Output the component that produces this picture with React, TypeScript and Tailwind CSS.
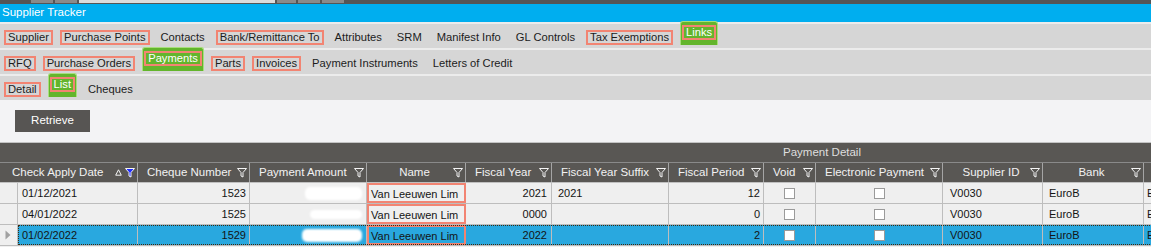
import { ReactNode } from "react";

type TabKind = "plain" | "boxed" | "active";

interface Tab {
  label: string;
  kind: TabKind;
}

const tabRows: Tab[][] = [
  [
    { label: "Supplier", kind: "boxed" },
    { label: "Purchase Points", kind: "boxed" },
    { label: "Contacts", kind: "plain" },
    { label: "Bank/Remittance To", kind: "boxed" },
    { label: "Attributes", kind: "plain" },
    { label: "SRM", kind: "plain" },
    { label: "Manifest Info", kind: "plain" },
    { label: "GL Controls", kind: "plain" },
    { label: "Tax Exemptions", kind: "boxed" },
    { label: "Links", kind: "active" },
  ],
  [
    { label: "RFQ", kind: "boxed" },
    { label: "Purchase Orders", kind: "boxed" },
    { label: "Payments", kind: "active" },
    { label: "Parts", kind: "boxed" },
    { label: "Invoices", kind: "boxed" },
    { label: "Payment Instruments", kind: "plain" },
    { label: "Letters of Credit", kind: "plain" },
  ],
  [
    { label: "Detail", kind: "boxed" },
    { label: "List", kind: "active" },
    { label: "Cheques", kind: "plain" },
  ],
];

function TabItem({ tab }: { tab: Tab }) {
  if (tab.kind === "active") {
    return (
      <div className="h-[24px] self-end rounded-t-[3px] border border-b-0 border-[#a8de7c] bg-[#63b52c] px-[1px] pt-[3px]">
        <div className="flex h-[15px] items-center border-2 border-[#f28472] px-[2px] text-white">
          {tab.label}
        </div>
      </div>
    );
  }
  return (
    <div
      className={`flex h-[15px] items-center border-2 px-[2px] text-[#1c1c1c] ${
        tab.kind === "boxed" ? "border-[#f28472]" : "border-transparent"
      }`}
    >
      {tab.label}
    </div>
  );
}

function Funnel({ active = false }: { active?: boolean }) {
  return (
    <svg width="10" height="10" viewBox="0 0 10 10" className="shrink-0">
      <path
        d="M0.5 0.5 H9.5 L6 4.5 V9 L4 8 V4.5 Z"
        fill={active ? "#1f2cff" : "none"}
        stroke="#f4f4f4"
        strokeWidth="1"
        strokeLinejoin="round"
      />
    </svg>
  );
}

function SortUp() {
  return (
    <svg width="7" height="7" viewBox="0 0 7 7" className="mr-[3px] shrink-0">
      <path d="M3.5 0.8 L6.3 6.2 H0.7 Z" fill="none" stroke="#f4f4f4" strokeWidth="1" />
    </svg>
  );
}

interface Col {
  key: string;
  label: string;
  w: number;
  center?: boolean;
}

const cols: Col[] = [
  { key: "cheque", label: "Cheque Number", w: 112 },
  { key: "amount", label: "Payment Amount", w: 117 },
  { key: "name", label: "Name", w: 99, center: true },
  { key: "fy", label: "Fiscal Year", w: 86 },
  { key: "fys", label: "Fiscal Year Suffix", w: 117 },
  { key: "fp", label: "Fiscal Period", w: 95 },
  { key: "void", label: "Void", w: 52 },
  { key: "ep", label: "Electronic Payment", w: 127 },
  { key: "sid", label: "Supplier ID", w: 100, center: true },
  { key: "bank", label: "Bank", w: 101, center: true },
];

const rows = [
  { date: "01/12/2021", cheque: "1523", blob: "w-[57px] h-[13px]", fy: "2021", fys: "2021", fp: "12" },
  { date: "04/01/2022", cheque: "1525", blob: "w-[52px] h-[9px]", fy: "0000", fys: "", fp: "0" },
  { date: "01/02/2022", cheque: "1529", blob: "w-[60px] h-[13px]", fy: "2022", fys: "", fp: "2", selected: true },
];

function Checkbox() {
  return <div className="h-[11px] w-[11px] border border-[#9a9a9a] bg-white" />;
}

function Cell({ w, className = "", children }: { w: number; className?: string; children?: ReactNode }) {
  return (
    <div
      style={{ width: w }}
      className={`flex h-full shrink-0 items-center overflow-hidden whitespace-nowrap border-r border-[#bdbdbd] ${className}`}
    >
      {children}
    </div>
  );
}

export default function App() {
  return (
    <div className="h-[247px] w-[1151px] overflow-hidden bg-[#f3f3f5] font-['Liberation_Sans',Arial,sans-serif] text-[11.5px]">
      <div className="flex h-[4px] items-start gap-[2px] bg-[#555555] pl-[31px]">
        <div className="h-[3px] w-[22px] bg-[#8a8a8a]" />
        <div className="h-[3px] w-[22px] bg-[#8a8a8a]" />
        <div className="h-[3px] w-[196px] bg-[#dcdcdc]" />
        <div className="h-[3px] w-[19px] bg-[#8a8a8a]" />
        <div className="h-[3px] w-[22px] bg-[#8a8a8a]" />
        <div className="h-[3px] w-[22px] bg-[#8a8a8a]" />
      </div>
      <div className="flex h-[18px] items-center bg-[#00aeef] pl-[2px] text-white">Supplier Tracker</div>

      <div className="flex flex-col gap-[2px] bg-[#ececec] pt-[2px] text-[11.2px]">
        {tabRows.map((row, i) => (
          <div key={i} className="flex h-[24px] items-end gap-[7px] bg-[#d6d6d6] pb-[3px] pl-[4px]">
            {row.map((t) => (
              <TabItem key={t.label} tab={t} />
            ))}
          </div>
        ))}
      </div>

      <div className="flex h-[42px] items-start pl-[15px] pt-[10px]">
        <button className="h-[22px] w-[75px] bg-[#575553] text-white">Retrieve</button>
      </div>

      <div className="border-t border-[#c3c3c3] text-[#f2f2f2]">
        <div className="flex h-[20px] items-center border-b border-[#8a8a8a] bg-[#595754] pl-[783px] text-[#dedede]">
          Payment Detail
        </div>
        <div className="flex h-[20px] items-center border-b border-[#c0c0c0] bg-[#595754]">
          <div className="flex h-full w-[138px] shrink-0 items-center border-r border-[#a5a5a5] pl-[12px] pr-[2px]">
            <span className="flex-1">Check Apply Date</span>
            <SortUp />
            <Funnel active />
          </div>
          {cols.map((c) => (
            <div
              key={c.key}
              style={{ width: c.w }}
              className="flex h-full shrink-0 items-center border-r border-[#a5a5a5] pl-[9px] pr-[2px]"
            >
              <span className={`flex-1 whitespace-nowrap ${c.center ? "text-center" : ""}`}>{c.label}</span>
              <Funnel />
            </div>
          ))}
          <div className="h-full flex-1" />
        </div>

        {rows.map((r) => (
          <div key={r.date} className="flex h-[21px] border-b border-[#bdbdbd] bg-[#efefef] text-[11px] text-[#141414]">
            <Cell w={18} className="pl-[5px]">
              {r.selected && (
                <svg width="6" height="10" viewBox="0 0 6 10">
                  <path d="M0.5 0.5 L5.5 5 L0.5 9.5 Z" fill="#a0a0a0" />
                </svg>
              )}
            </Cell>
            <div
              className={`flex h-full ${
                r.selected ? "bg-[#29a8df] outline-1 -outline-offset-1 outline-dotted outline-[#3a2a10]" : ""
              }`}
            >
              <Cell w={120} className="pl-[4px]">{r.date}</Cell>
              <Cell w={112} className="justify-end pr-[3px]">{r.cheque}</Cell>
              <Cell w={117} className="justify-end pr-[4px]">
                <div className={`${r.blob} rounded-[5px] bg-white blur-[1px]`} />
              </Cell>
              <div className="flex h-full w-[99px] shrink-0 items-start overflow-hidden whitespace-nowrap border-2 border-[#f28472] pl-[2px] pt-[1px]">
                Van Leeuwen Lim
              </div>
              <Cell w={86} className="justify-end pr-[4px]">{r.fy}</Cell>
              <Cell w={117} className="pl-[6px]">{r.fys}</Cell>
              <Cell w={95} className="justify-end pr-[3px]">{r.fp}</Cell>
              <Cell w={52} className="justify-center">
                <Checkbox />
              </Cell>
              <Cell w={127} className="justify-center">
                <Checkbox />
              </Cell>
              <Cell w={100} className="pl-[7px]">V0030</Cell>
              <Cell w={101} className="pl-[6px]">EuroB</Cell>
              <Cell w={60} className="pl-[3px]">E</Cell>
            </div>
          </div>
        ))}
        <div className="h-[10px] bg-[#efefef]" />
      </div>
    </div>
  );
}
